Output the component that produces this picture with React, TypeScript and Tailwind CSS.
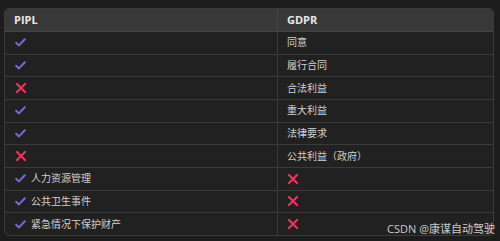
import React from 'react';

const Check = () => (
    <svg width="11" height="9" viewBox="0 0 11 9" className="shrink-0">
        <path d="M1.2 4.8 L4 7.4 L9.8 1.2" fill="none" stroke="#7b68d8" strokeWidth="2" strokeLinecap="round" strokeLinejoin="round" />
    </svg>
);

const Cross = () => (
    <svg width="12" height="12" viewBox="0 0 12 12" className="shrink-0">
        <path d="M2 2 L10 10 M10 2 L2 10" fill="none" stroke="#f0335c" strokeWidth="2.2" strokeLinecap="round" />
    </svg>
);

type Cell = { icon?: 'check' | 'cross'; text?: string };

const rows: [Cell, Cell][] = [
    [{ icon: 'check' }, { text: '同意' }],
    [{ icon: 'check' }, { text: '履行合同' }],
    [{ icon: 'cross' }, { text: '合法利益' }],
    [{ icon: 'check' }, { text: '重大利益' }],
    [{ icon: 'check' }, { text: '法律要求' }],
    [{ icon: 'cross' }, { text: '公共利益（政府）' }],
    [{ icon: 'check', text: '人力资源管理' }, { icon: 'cross' }],
    [{ icon: 'check', text: '公共卫生事件' }, { icon: 'cross' }],
    [{ icon: 'check', text: '紧急情况下保护财产' }, { icon: 'cross' }],
];

function CellView({ cell, last }: { cell: Cell; last?: boolean }) {
    return (
        <div className={`flex items-center gap-[5px] ${last ? 'pl-[9px]' : 'pl-[10px] border-r border-[#3a3a3a]'}`}>
            {cell.icon === 'check' && <Check />}
            {cell.icon === 'cross' && <Cross />}
            {cell.text && <span className="text-[10px] text-[#d0d0d0]">{cell.text}</span>}
        </div>
    );
}

export default function App() {
    return (
        <div
            className="relative w-[500px] h-[241px] bg-[#1d1d1d] pt-[8px] pl-[4px] pr-[6px]"
            style={{ fontFamily: '"Open Sans", "Noto Sans CJK SC", sans-serif' }}
        >
            <div className="rounded-[5px] border border-[#3a3a3a] bg-[#212121] overflow-hidden">
                <div className="grid grid-cols-[273px_1fr] h-[23px] bg-[#383838] border-b border-[#454545]">
                    <div className="flex items-center pl-[9px] border-r border-[#454545] text-[11px] font-bold text-[#e8e8e8]">PIPL</div>
                    <div className="flex items-center pl-[9px] text-[11px] font-bold text-[#e8e8e8]">GDPR</div>
                </div>
                {rows.map((r, i) => (
                    <div
                        key={i}
                        className={`grid grid-cols-[273px_1fr] ${i < rows.length - 1 ? 'h-[22.67px] border-b border-[#3a3a3a]' : 'h-[21.67px]'}`}
                    >
                        <CellView cell={r[0]} />
                        <CellView cell={r[1]} last />
                    </div>
                ))}
            </div>
            <div className="absolute right-[5px] bottom-[7px] text-[11px] text-[#cccccc] leading-none">CSDN @康谋自动驾驶</div>
        </div>
    );
}
